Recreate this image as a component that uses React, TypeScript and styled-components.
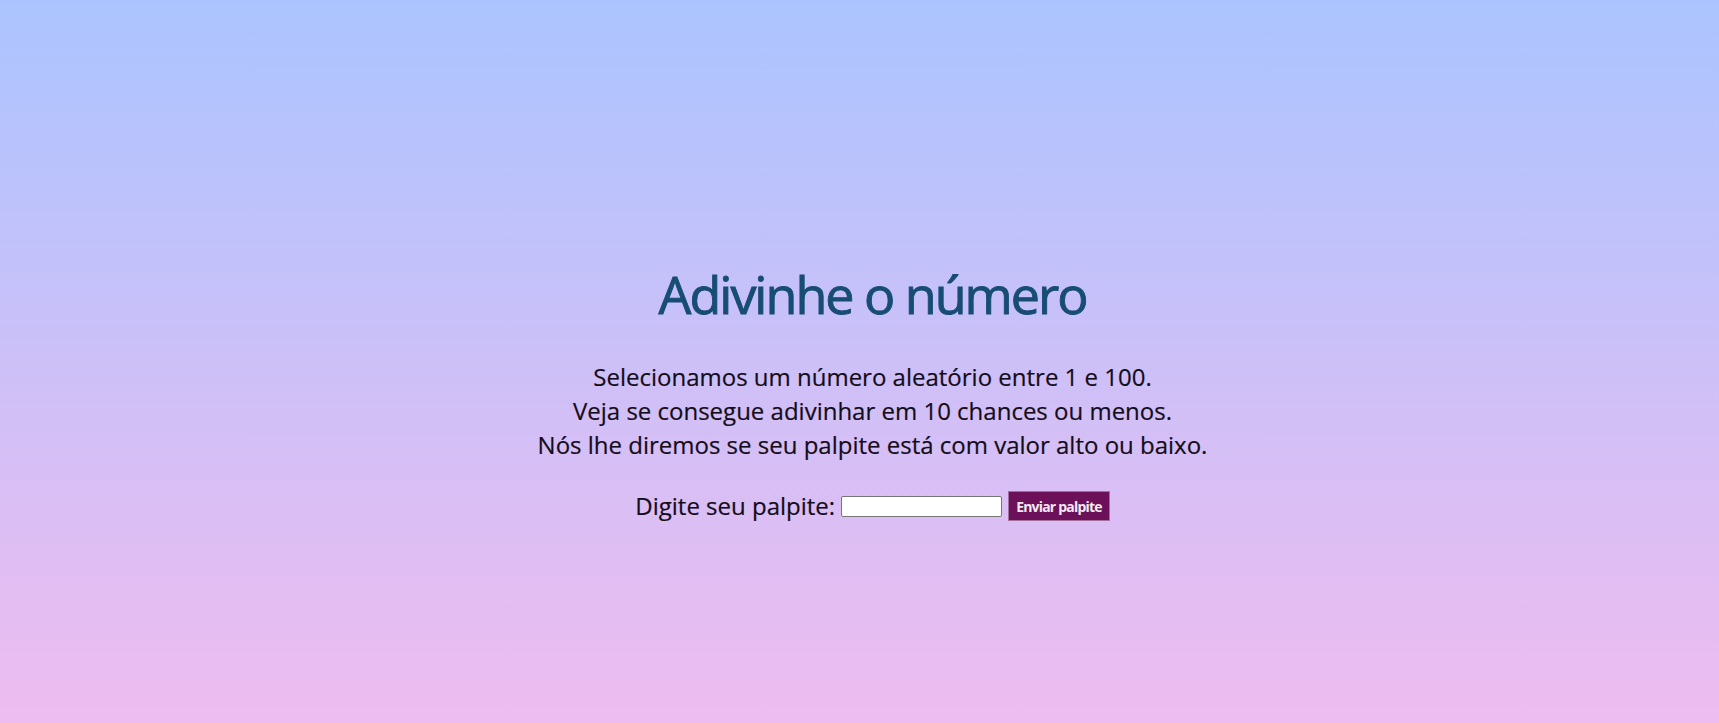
import React from "react";
import styled, { createGlobalStyle } from "styled-components";

const Global = createGlobalStyle`
  html, body { margin: 0; padding: 0; }
  body {
    min-height: 100vh;
    background: linear-gradient(to bottom, #abc4ff, #eebcf0);
    font-family: "Open Sans", "Liberation Sans", sans-serif;
  }
`;

const Page = styled.main`
  min-height: 723px;
  display: flex;
  flex-direction: column;
  align-items: center;
  padding: 258px 0 0 26px;
  box-sizing: border-box;
  text-align: center;
`;

const Title = styled.h1`
  margin: 0;
  font-size: 52px;
  font-weight: 400;
  letter-spacing: -2px;
  line-height: 72px;
  color: #174c74;
  -webkit-text-stroke: 0.9px #174c74;
`;

const Intro = styled.p`
  margin: 30px 0 0;
  font-size: 24px;
  line-height: 34px;
  color: #150c1a;
  -webkit-text-stroke: 0.2px #150c1a;
`;

const Form = styled.form`
  margin-top: 27px;
  display: flex;
  align-items: center;
  font-size: 24px;
  line-height: 34px;
  color: #150c1a;
  -webkit-text-stroke: 0.2px #150c1a;
`;

const Label = styled.label`
  margin-right: 6px;
`;

const Input = styled.input`
  width: 161px;
  height: 21px;
  box-sizing: border-box;
  border: 1px solid #767676;
  border-radius: 2px;
  background: #fff;
  padding: 1px 2px;
  margin-right: 6px;
`;

const Button = styled.button`
  height: 30px;
  padding: 0 7px;
  border: 1px solid #a0709a;
  background: #6c1159;
  color: #f2eaf1;
  font-family: "Open Sans", "Liberation Sans", sans-serif;
  font-weight: 700;
  font-size: 14px;
  letter-spacing: -0.8px;
  -webkit-text-stroke: 0;
  cursor: pointer;
`;

export default function App() {
  return (
    <>
      <Global />
      <Page>
        <Title>Adivinhe o número</Title>
        <Intro>
          Selecionamos um número aleatório entre 1 e 100.
          <br />
          Veja se consegue adivinhar em 10 chances ou menos.
          <br />
          Nós lhe diremos se seu palpite está com valor alto ou baixo.
        </Intro>
        <Form onSubmit={(e) => e.preventDefault()}>
          <Label htmlFor="guess">Digite seu palpite:</Label>
          <Input id="guess" type="text" />
          <Button type="submit">Enviar palpite</Button>
        </Form>
      </Page>
    </>
  );
}
